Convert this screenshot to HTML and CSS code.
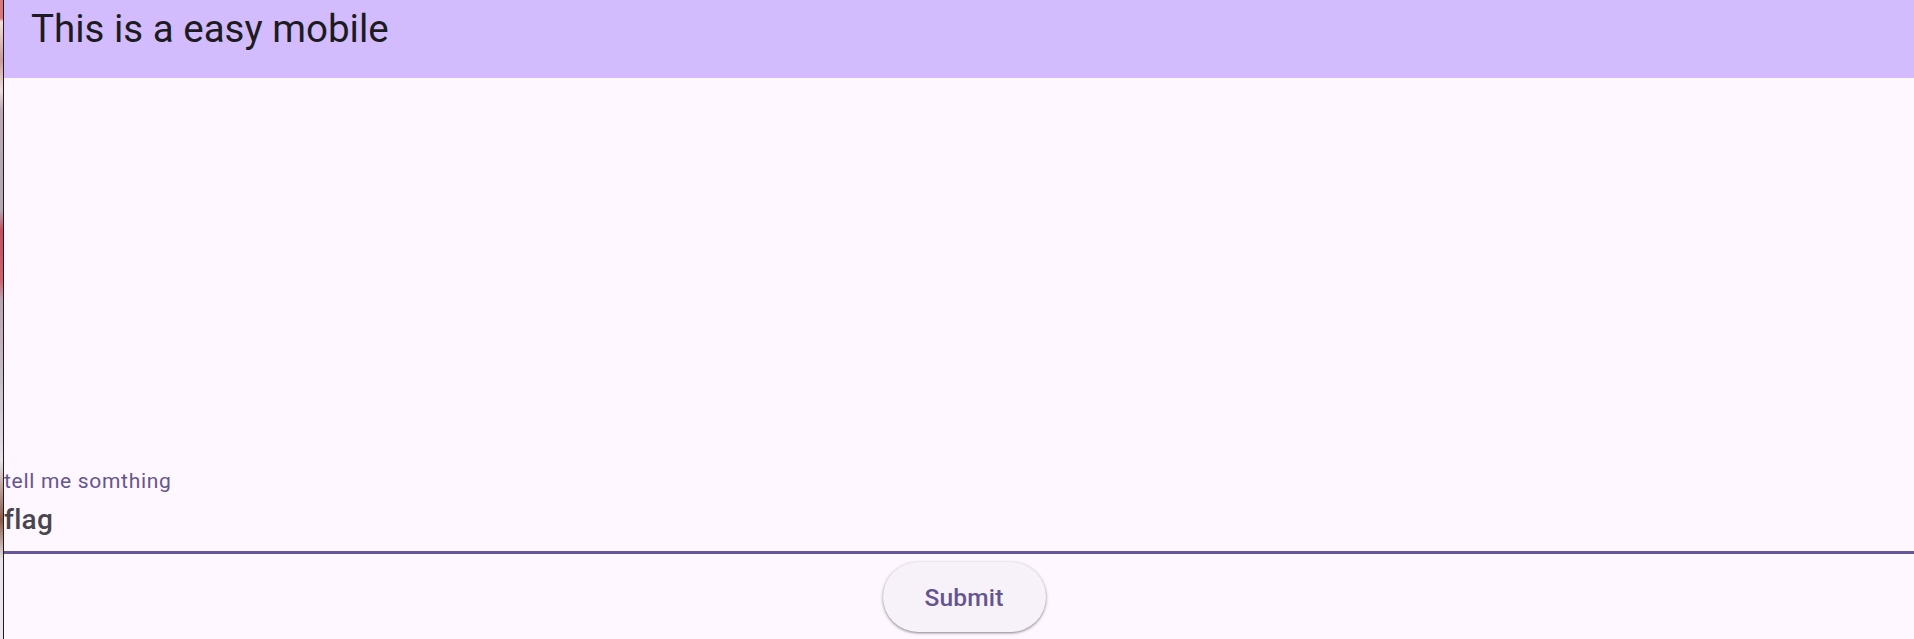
FILE: index.html
```html
<!DOCTYPE html>
<html lang="en">
<head>
<meta charset="utf-8">
<title>This is a easy mobile</title>
<link rel="stylesheet" href="styles.css">
</head>
<body>
<div class="strip"></div>
<div class="divider"></div>
<div class="app">
  <header class="appbar">
    <h1 class="title">This is a easy mobile</h1>
  </header>
  <main class="content">
    <div class="spacer"></div>
    <div class="field">
      <label class="label" for="msg">tell me somthing</label>
      <div class="input" id="msg">flag</div>
    </div>
    <div class="actions">
      <button class="submit" type="button">Submit</button>
    </div>
  </main>
</div>
</body>
</html>
```
FILE: styles.css
```css
html, body {
  margin: 0;
  padding: 0;
  height: 100%;
}
body {
  display: flex;
  flex-direction: row;
  background: #fef7ff;
  font-family: Roboto, "Liberation Sans", sans-serif;
  overflow: hidden;
}
.strip {
  width: 3px;
  flex: none;
  background: linear-gradient(to bottom,
    #d9767e 0px, #d9767e 18px,
    #f2dede 22px, #c99aa0 60px, #efdede 90px,
    #b9aab3 110px, #b7a9b2 210px,
    #c44f61 230px, #d0606e 280px, #b9a6b0 300px,
    #c9bec5 380px, #e6e2e6 460px, #8a5a48 520px, #e8e4e8 560px, #ebe7eb 639px);
}
.divider {
  width: 1px;
  flex: none;
  background: #1d1b20;
}
.app {
  flex: 1;
  display: flex;
  flex-direction: column;
  min-width: 0;
}
.appbar {
  height: 78px;
  flex: none;
  background: #d3bcfd;
  box-sizing: border-box;
  padding: 6px 0 0 27px;
}
.title {
  margin: 0;
  font-size: 38.5px;
  line-height: 45px;
  font-weight: 400;
  color: #1d1b20;
}
.content {
  flex: 1;
  display: flex;
  flex-direction: column;
  padding-bottom: 7px;
}
.spacer {
  flex: 1;
}
.field {
  display: flex;
  flex-direction: column;
  border-bottom: 3px solid #67579a;
  padding-bottom: 15px;
}
.label {
  font-size: 21px;
  line-height: 24px;
  color: #65558f;
  letter-spacing: 0.7px;
}
.input {
  margin-top: 11px;
  font-size: 28px;
  line-height: 32px;
  font-weight: 500;
  letter-spacing: 0.3px;
  color: #49454f;
}
.actions {
  display: flex;
  justify-content: center;
  padding: 8px 0 0 10px;
}
.submit {
  width: 163px;
  height: 70px;
  border: none;
  border-radius: 35px;
  background: #f7f2fa;
  color: #65558f;
  font-family: Roboto, "Liberation Sans", sans-serif;
  font-size: 24.5px;
  font-weight: 500;
  letter-spacing: 0.175px;
  box-shadow: 0 1px 2px rgba(0,0,0,0.3), 0 1px 3px 1px rgba(0,0,0,0.15);
  padding: 0;
}
```
